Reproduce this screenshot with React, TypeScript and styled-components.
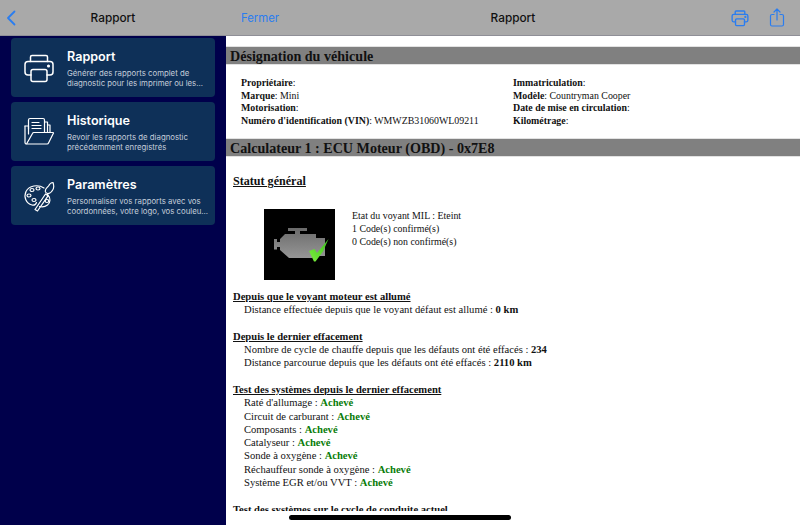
import React from 'react';
import styled, { createGlobalStyle } from 'styled-components';

const GlobalStyle = createGlobalStyle`
  html, body {
    margin: 0;
    padding: 0;
    width: 800px;
    height: 525px;
    overflow: hidden;
    background: #fff;
  }
`;

const Screen = styled.div`
  position: relative;
  display: flex;
  width: 800px;
  height: 525px;
  overflow: hidden;
  font-family: 'Inter', 'Liberation Sans', sans-serif;
`;

const Sidebar = styled.aside`
  flex: 0 0 226px;
  display: flex;
  flex-direction: column;
  background: #00004b;
`;

const NavBar = styled.header`
  flex: 0 0 35px;
  display: flex;
  align-items: center;
  position: relative;
  background: #a9a9a9;
  border-bottom: 1px solid #8f8f97;
`;

const NavTitle = styled.div`
  flex: 1;
  text-align: center;
  font-size: 11.8px;
  font-weight: 500;
  color: #111;
`;

const BackButton = styled.svg`
  position: absolute;
  left: 6px;
  top: 10px;
  width: 10px;
  height: 16px;
`;

const CardList = styled.div`
  display: flex;
  flex-direction: column;
  gap: 5px;
  padding: 2px 11px 0;
`;

const Card = styled.div`
  height: 59px;
  display: flex;
  align-items: center;
  border-radius: 4px;
  background: #0e3058;
  color: #fff;
`;

const CardIcon = styled.svg`
  flex: 0 0 auto;
  width: 32px;
  height: 32px;
  margin-left: 12px;
  margin-right: 12px;
`;

const CardBody = styled.div`
  min-width: 0;
  padding-top: 2px;
`;

const CardTitle = styled.div`
  font-size: 12.6px;
  font-weight: 600;
  line-height: 15px;
  margin-bottom: 5px;
`;

const CardText = styled.div`
  font-size: 7.8px;
  line-height: 9.5px;
  color: #c3ccd8;
  white-space: nowrap;
`;

const Main = styled.main`
  flex: 1;
  display: flex;
  flex-direction: column;
  min-width: 0;
  padding-bottom: 14px;
  background: #fff;
`;

const MainBar = styled(NavBar)`
  padding: 0 15px;
  justify-content: space-between;
`;

const CloseLink = styled.span`
  font-size: 11.3px;
  color: #2a7df0;
`;

const MainTitle = styled.div`
  position: absolute;
  left: 0;
  right: 0;
  text-align: center;
  font-size: 11.8px;
  font-weight: 500;
  color: #111;
`;

const ActionIcons = styled.div`
  display: flex;
  align-items: center;
  gap: 20px;
`;

const Report = styled.div`
  flex: 1;
  overflow: hidden;
  padding-top: 10px;
  font-family: 'Liberation Serif', 'Times New Roman', serif;
  font-size: 10.6px;
  line-height: 13.3px;
  color: #111;
`;

const SectionBar = styled.h2`
  margin: 0;
  height: 17px;
  padding-left: 4px;
  background: #808080;
  border-top: 1px solid #e2e2e2;
  border-bottom: 1px solid #e2e2e2;
  box-sizing: content-box;
  font-size: 14.1px;
  line-height: 18px;
  font-weight: 700;
  color: #111;
`;

const VehicleGrid = styled.div`
  display: grid;
  grid-template-columns: 272px 1fr;
  padding: 12px 15px 10.5px;
  font-size: 9.9px;
  line-height: 12.6px;
`;

const FieldColumn = styled.div`
  display: flex;
  flex-direction: column;
`;

const Heading = styled.h3`
  margin: 0;
  padding: 17.5px 0 20px 7px;
  font-size: 12.1px;
  line-height: 15px;
  font-weight: 700;
  text-decoration: underline;
`;

const StatusRow = styled.div`
  display: flex;
  align-items: flex-start;
  padding-left: 38px;
  gap: 17px;
  margin-bottom: 9.5px;
`;

const Thumb = styled.svg`
  flex: 0 0 71px;
  width: 71px;
  height: 71px;
`;

const StatusLines = styled.div`
  display: flex;
  flex-direction: column;
  padding-top: 1px;
  font-size: 9.9px;
  line-height: 12.6px;
`;

const Block = styled.section`
  padding-left: 7px;
  margin-bottom: 13.3px;
`;

const BlockTitle = styled.div`
  font-weight: 700;
  text-decoration: underline;
`;

const Line = styled.div`
  padding-left: 11px;
`;

const Done = styled.b`
  color: #0a7d0a;
`;

const HomeIndicator = styled.div`
  position: absolute;
  left: 289px;
  top: 515px;
  width: 222px;
  height: 5px;
  border-radius: 3px;
  background: #000;
`;

const tests = [
  "Raté d'allumage",
  'Circuit de carburant',
  'Composants',
  'Catalyseur',
  'Sonde à oxygène',
  'Réchauffeur sonde à oxygène',
  'Système EGR et/ou VVT',
];

function PrinterGlyph({ color, width }: { color: string; width: number }) {
  return (
    <g fill="none" stroke={color} strokeWidth={width} strokeLinejoin="round" strokeLinecap="round">
      <path d="M7.500 9.500V5a1.500 1.500 0 0 1 1.500-1.500h14A1.500 1.500 0 0 1 24.500 5v4.500" />
      <path d="M8 23H5a3 3 0 0 1-3-3v-7.500a3 3 0 0 1 3-3h22a3 3 0 0 1 3 3V20a3 3 0 0 1-3 3h-3" />
      <rect x="8" y="17.500" width="16" height="12" rx="2" />
      <circle cx="25.500" cy="14" r="0.8" fill={color} />
    </g>
  );
}

function App() {
  return (
    <Screen>
      <GlobalStyle />
      <Sidebar>
        <NavBar>
          <BackButton viewBox="0 0 10 16">
            <path d="M8.500 1.500 2 8l6.500 6.500" fill="none" stroke="#2a7df0" strokeWidth="1.800" strokeLinecap="round" strokeLinejoin="round" />
          </BackButton>
          <NavTitle>Rapport</NavTitle>
        </NavBar>
        <CardList>
          <Card>
            <CardIcon viewBox="0 0 32 32">
              <PrinterGlyph color="#fff" width={1.500} />
            </CardIcon>
            <CardBody>
              <CardTitle>Rapport</CardTitle>
              <CardText>Générer des rapports complet de</CardText>
              <CardText>diagnostic pour les imprimer ou les...</CardText>
            </CardBody>
          </Card>
          <Card>
            <CardIcon viewBox="0 0 32 32">
              <g fill="none" stroke="#fff" strokeWidth="1.200" strokeLinejoin="round" strokeLinecap="round">
                <path d="M5.500 13V4a1.500 1.500 0 0 1 1.500-1.500h13a1.500 1.500 0 0 1 1.500 1.500v12" />
                <path d="M9 6.500h7M9 9.500h9M9 12.500h9" />
                <path d="M21.500 6h3v10M24.500 9h2.500v7" />
                <path d="M2 10v16.500A1.500 1.500 0 0 0 3.500 28H24a1.500 1.500 0 0 0 1.500-1L30.500 17a.5.5 0 0 0-.5-.5H11a1.500 1.500 0 0 0-1.500 1L3.500 28" />
                <path d="M2 10h3.500v8" />
              </g>
            </CardIcon>
            <CardBody>
              <CardTitle>Historique</CardTitle>
              <CardText>Revoir les rapports de diagnostic</CardText>
              <CardText>précédemment enregistrés</CardText>
            </CardBody>
          </Card>
          <Card>
            <CardIcon viewBox="0 0 32 32">
              <g fill="none" stroke="#fff" strokeWidth="1.200" strokeLinejoin="round" strokeLinecap="round">
                <path d="M21 8C15 4 6 5.500 3 11.500c-2.500 5.500 0 12 6 13.500 3 .7 4-1 4.500-2.500" />
                <path d="M24.500 14.500c3.500 3.500 3 8.500 0 10.500-2 1.500-5 2.200-8 1.500" />
                <path d="M12 29.500 22.500 14l2.500 1.800L14.500 31z" />
                <path d="M22.500 12c-1-3 1.500-4 3-6 1-2 2.500-3.500 4.500-3.500 1 3 1 6.500-1 8.500-1.500 2-4.500 4-6.500 1z" />
                <ellipse cx="9" cy="10" rx="2" ry="1.500" />
                <ellipse cx="15" cy="8.500" rx="2" ry="1.500" />
                <ellipse cx="6" cy="15.500" rx="2" ry="1.500" />
                <ellipse cx="11" cy="20" rx="2" ry="1.500" />
                <ellipse cx="24" cy="21" rx="1.800" ry="1.500" />
              </g>
            </CardIcon>
            <CardBody>
              <CardTitle>Paramètres</CardTitle>
              <CardText>Personnaliser vos rapports avec vos</CardText>
              <CardText>coordonnées, votre logo, vos couleu...</CardText>
            </CardBody>
          </Card>
        </CardList>
      </Sidebar>
      <Main>
        <MainBar>
          <CloseLink>Fermer</CloseLink>
          <MainTitle>Rapport</MainTitle>
          <ActionIcons>
            <svg width="18" height="18" viewBox="0 0 32 32">
              <PrinterGlyph color="#2a7df0" width={2.400} />
            </svg>
            <svg width="16" height="19" viewBox="0 0 16 19" fill="none" stroke="#2a7df0" strokeWidth="1.200" strokeLinecap="round" strokeLinejoin="round">
              <path d="M5 6.500H3A1.500 1.500 0 0 0 1.500 8v8.500A1.500 1.500 0 0 0 3 18h10a1.500 1.500 0 0 0 1.500-1.500V8A1.500 1.500 0 0 0 13 6.500h-2" />
              <path d="M8 12V1M5 4l3-3 3 3" />
            </svg>
          </ActionIcons>
        </MainBar>
        <Report>
          <SectionBar>Désignation du véhicule</SectionBar>
          <VehicleGrid>
            <FieldColumn>
              <div><b>Propriétaire</b>:</div>
              <div><b>Marque</b>: Mini</div>
              <div><b>Motorisation</b>:</div>
              <div><b>Numéro d'identification (VIN)</b>: WMWZB31060WL09211</div>
            </FieldColumn>
            <FieldColumn>
              <div><b>Immatriculation</b>:</div>
              <div><b>Modèle</b>: Countryman Cooper</div>
              <div><b>Date de mise en circulation</b>:</div>
              <div><b>Kilométrage</b>:</div>
            </FieldColumn>
          </VehicleGrid>
          <SectionBar>Calculateur 1 : ECU Moteur (OBD) - 0x7E8</SectionBar>
          <Heading>Statut général</Heading>
          <StatusRow>
            <Thumb viewBox="0 0 71 71">
              <defs>
                <linearGradient id="engine" x1="0" y1="0" x2="0" y2="1">
                  <stop offset="0" stopColor="#6a6a6a" />
                  <stop offset="1" stopColor="#969696" />
                </linearGradient>
                <linearGradient id="tick" x1="1" y1="0" x2="0" y2="1">
                  <stop offset="0" stopColor="#3cc01e" />
                  <stop offset="1" stopColor="#7df03e" />
                </linearGradient>
              </defs>
              <rect width="71" height="71" fill="#000" />
              <path
                fill="url(#engine)"
                d="M24 19H43V22H36V25H52V29H61V47H50L48 49H25L16 41V38H13V40.500H10V30H13V33H16V30L21 25H31V22H24Z"
              />
              <path fill="url(#tick)" d="M45 42L50.500 40L53 44L64.500 30L59 42.500L51.500 52.500H50Z" />
            </Thumb>
            <StatusLines>
              <div>Etat du voyant MIL : Eteint</div>
              <div>1 Code(s) confirmé(s)</div>
              <div>0 Code(s) non confirmé(s)</div>
            </StatusLines>
          </StatusRow>
          <Block>
            <BlockTitle>Depuis que le voyant moteur est allumé</BlockTitle>
            <Line>Distance effectuée depuis que le voyant défaut est allumé : <b>0 km</b></Line>
          </Block>
          <Block>
            <BlockTitle>Depuis le dernier effacement</BlockTitle>
            <Line>Nombre de cycle de chauffe depuis que les défauts ont été effacés : <b>234</b></Line>
            <Line>Distance parcourue depuis que les défauts ont été effacés : <b>2110 km</b></Line>
          </Block>
          <Block>
            <BlockTitle>Test des systèmes depuis le dernier effacement</BlockTitle>
            {tests.map((name) => (
              <Line key={name}>{name} : <Done>Achevé</Done></Line>
            ))}
          </Block>
          <Block>
            <BlockTitle>Test des systèmes sur le cycle de conduite actuel</BlockTitle>
          </Block>
        </Report>
      </Main>
      <HomeIndicator />
    </Screen>
  );
}

export default App;
